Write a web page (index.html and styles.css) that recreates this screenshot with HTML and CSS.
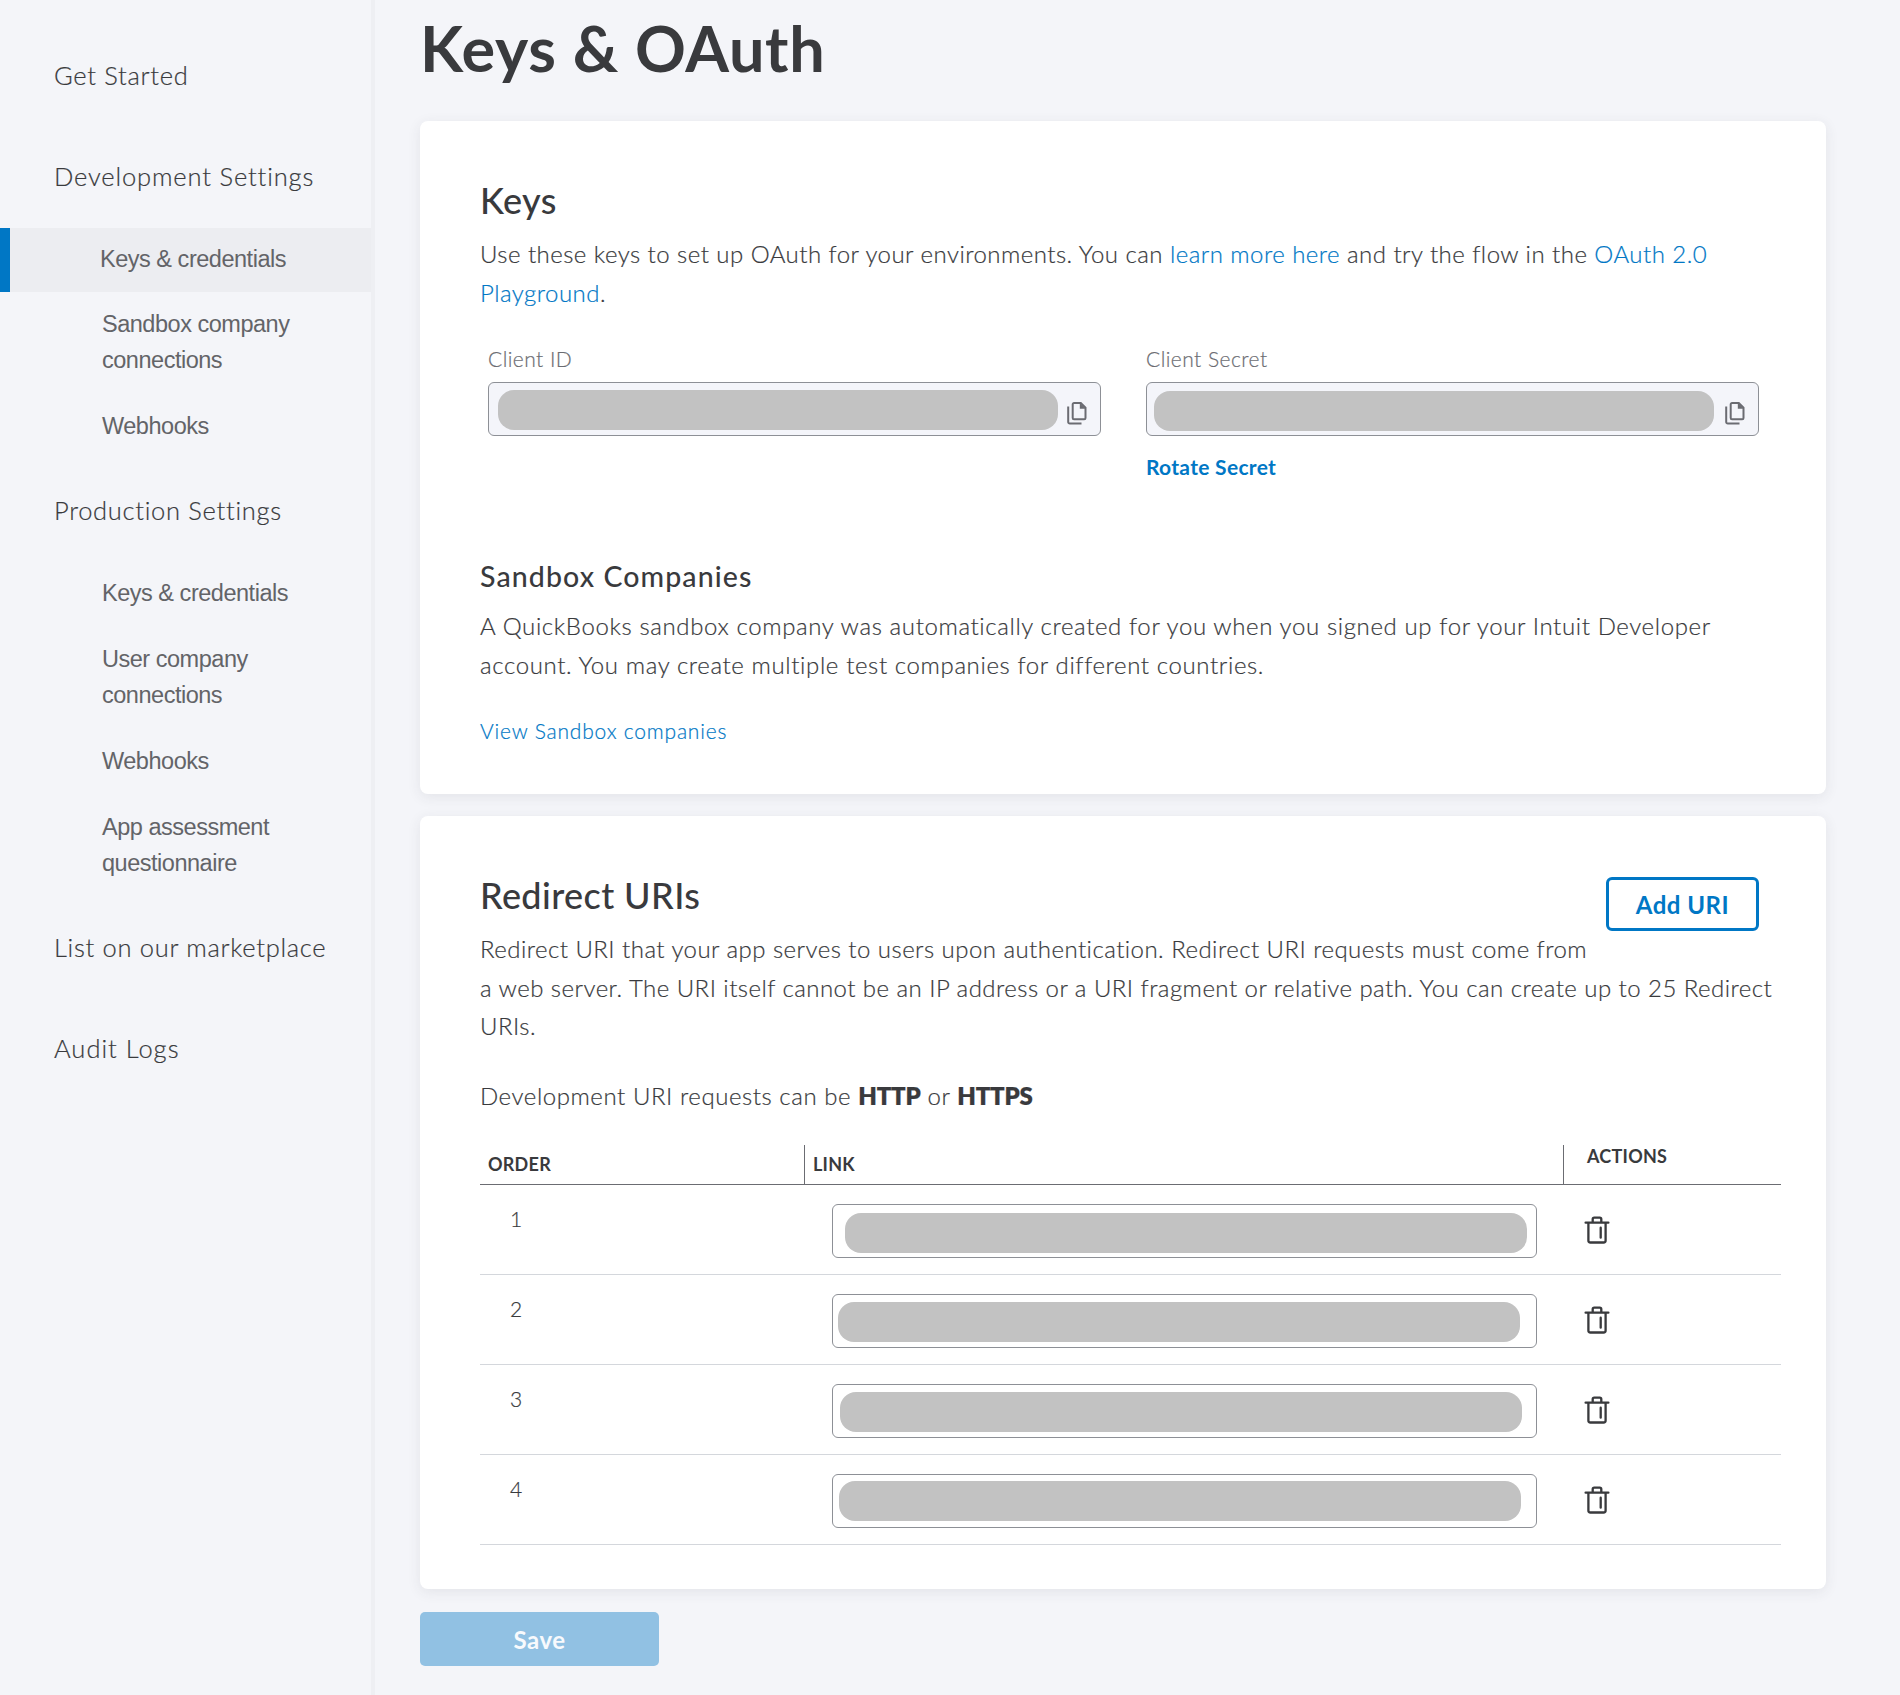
FILE: index.html
```html
<!DOCTYPE html>
<html lang="en">
<head>
<meta charset="utf-8">
<title>Keys &amp; OAuth</title>
<link rel="stylesheet" href="styles.css">
</head>
<body>
<svg width="0" height="0" class="sprite">
  <symbol id="copy" viewBox="0 0 20 24"><path d="M1.2 5.500V21a1.600 1.600 0 0 0 1.600 1.600H14.500" fill="none" stroke="currentColor" stroke-width="2"/><path d="M7 2h6.800l4.700 4.700V17a1.300 1.300 0 0 1-1.300 1.300H7A1.300 1.300 0 0 1 5.700 17V3.300A1.300 1.300 0 0 1 7 2z" fill="none" stroke="currentColor" stroke-width="2"/><path d="M12.800 2v5.700h5.700z" fill="currentColor"/></symbol>
  <symbol id="trash" viewBox="0 0 26 30"><g fill="none" stroke="currentColor" stroke-width="2.300" stroke-linecap="round" stroke-linejoin="round"><path d="M1.600 7.700h22.800M4.400 7.700v17.800a2 2 0 0 0 2 2h13.200a2 2 0 0 0 2-2V7.700M8.700 7.200V4.200a1.500 1.500 0 0 1 1.500-1.500h5.600a1.500 1.500 0 0 1 1.500 1.500v3M16.700 12.700v10"/></g></symbol>
</svg>
<div class="layout">
  <nav class="sidebar">
    <a class="nav-heading">Get Started</a>
    <a class="nav-heading nav-heading--dev">Development Settings</a>
    <ul class="nav-list nav-list--dev">
      <li class="active">Keys &amp; credentials</li>
      <li>Sandbox company<br>connections</li>
      <li>Webhooks</li>
    </ul>
    <a class="nav-heading">Production Settings</a>
    <ul class="nav-list">
      <li>Keys &amp; credentials</li>
      <li>User company<br>connections</li>
      <li>Webhooks</li>
      <li>App assessment<br>questionnaire</li>
    </ul>
    <a class="nav-heading">List on our marketplace</a>
    <a class="nav-heading nav-heading--logs">Audit Logs</a>
  </nav>
  <main class="main">
    <h1>Keys &amp; OAuth</h1>
    <section class="card">
      <h2>Keys</h2>
      <p class="copy">Use these keys to set up OAuth for your environments. You can <a>learn more here</a> and try the flow in the <a>OAuth 2.0<br>Playground</a>.</p>
      <div class="fields">
        <div class="field">
          <label>Client ID</label>
          <div class="box"><i class="mask mask--id"></i><svg class="icon-copy"><use href="#copy"/></svg></div>
        </div>
        <div class="field">
          <label>Client Secret</label>
          <div class="box"><i class="mask mask--secret"></i><svg class="icon-copy"><use href="#copy"/></svg></div>
          <a class="rotate">Rotate Secret</a>
        </div>
      </div>
      <h3>Sandbox Companies</h3>
      <p class="copy copy--sandbox">A QuickBooks sandbox company was automatically created for you when you signed up for your Intuit Developer<br>account. You may create multiple test companies for different countries.</p>
      <a class="view">View Sandbox companies</a>
    </section>
    <section class="card card--uris">
      <button class="add">Add URI</button>
      <h2>Redirect URIs</h2>
      <p class="copy">Redirect URI that your app serves to users upon authentication. Redirect URI requests must come from<br>a web server. The URI itself cannot be an IP address or a URI fragment or relative path. You can create up to 25 Redirect<br>URIs.</p>
      <p class="copy copy--dev">Development URI requests can be <b>HTTP</b> or <b>HTTPS</b></p>
      <div class="table">
        <div class="row row--head"><div>ORDER</div><div>LINK</div><div>ACTIONS</div></div>
        <div class="row"><div class="num">1</div><div class="link"><div class="uri"><i class="mask mask--1"></i></div></div><div class="act"><svg class="icon-trash"><use href="#trash"/></svg></div></div>
        <div class="row"><div class="num">2</div><div class="link"><div class="uri"><i class="mask mask--2"></i></div></div><div class="act"><svg class="icon-trash"><use href="#trash"/></svg></div></div>
        <div class="row"><div class="num">3</div><div class="link"><div class="uri"><i class="mask mask--3"></i></div></div><div class="act"><svg class="icon-trash"><use href="#trash"/></svg></div></div>
        <div class="row"><div class="num">4</div><div class="link"><div class="uri"><i class="mask mask--4"></i></div></div><div class="act"><svg class="icon-trash"><use href="#trash"/></svg></div></div>
      </div>
    </section>
    <button class="save">Save</button>
  </main>
</div>
</body>
</html>
```
FILE: styles.css
```css
* { box-sizing: border-box; }
body {
  margin: 0;
  background: #f4f5f9;
  color: #393a3d;
  font-family: Lato, "Open Sans", sans-serif;
  font-weight: 300;
}
.sprite { display: none; }
.layout { display: flex; height: 1695px; overflow: hidden; }

.sidebar {
  flex: none;
  width: 375px;
  padding-top: 57px;
  border-right: 4px solid #eeeff3;
}
.nav-heading {
  display: block;
  margin: 0 0 65px 54px;
  font-size: 25.5px;
  line-height: 36px;
  letter-spacing: .7px;
  white-space: nowrap;
  -webkit-text-stroke: .2px currentColor;
}
.nav-heading--dev { letter-spacing: .85px; }
.nav-heading--logs { letter-spacing: 1px; }
.nav-heading:has(+ .nav-list) { margin-bottom: 47px; }
.nav-heading:has(+ .nav-list--dev) { margin-bottom: 34px; }
.nav-list {
  display: flex;
  flex-direction: column;
  gap: 30px;
  margin: 0 0 48px;
  padding: 0;
  list-style: none;
  color: #636468;
  font: 23.5px/36px "Liberation Sans", Arial, sans-serif;
  letter-spacing: -.48px;
}
.nav-list li { padding-left: 102px; }
.nav-list .active {
  margin-bottom: -16px;
  padding: 13px 0 15px 90px;
  border-left: 10px solid #0077c5;
  background: #ecedf1;
}
.nav-list--dev { margin-bottom: 48px; }

.main { width: 1406px; margin-left: 45px; }
h1, h2, h3, p { margin: 0; }
h1 {
  height: 121px;
  padding-top: 8px;
  font-size: 63px;
  font-weight: 700;
  line-height: 80px;
  letter-spacing: .7px;
}
.card {
  height: 673px;
  padding: 55px 45px 0 60px;
  border-radius: 8px;
  background: #fff;
  box-shadow: 0 3px 14px rgba(57, 58, 61, .09);
}
h2 { font-size: 36px; font-weight: 500; line-height: 48px; letter-spacing: .4px; }
h3 { margin-top: 75px; font-size: 28.5px; font-weight: 500; line-height: 40px; letter-spacing: 1.1px; }
.copy {
  margin-top: 11px;
  font-size: 24px;
  line-height: 38.6px;
  letter-spacing: .46px;
  white-space: nowrap;
  -webkit-text-stroke: .2px currentColor;
}
.copy--sandbox { letter-spacing: .62px; }
.copy--dev { margin-top: 31px; letter-spacing: .56px; }
.copy b { font-weight: 800; letter-spacing: -.2px; }
.card a { color: #0077c5; }
.fields { display: flex; gap: 45px; margin: 33px 0 0 8px; }
.field { width: 613px; }
.field:first-child { flex: none; }
label {
  display: block;
  color: #6b6c72;
  font-size: 21px;
  line-height: 28px;
  letter-spacing: .45px;
  -webkit-text-stroke: .2px currentColor;
}
.box {
  display: flex;
  height: 54px;
  margin-top: 9px;
  border: 1px solid #8d9096;
  border-radius: 6px;
  background: #f4f5fa;
}
.mask {
  flex: none;
  height: 40px;
  border-radius: 16px;
  background: #c2c2c2;
}
.mask--id { width: 560px; margin: 7px 9px 0 9px; }
.mask--secret { width: 560px; margin: 8px 11px 0 7px; }
.icon-copy { width: 20px; height: 24px; margin-top: 18px; color: #6b6c72; }
.rotate {
  display: block;
  margin-top: 17px;
  font-size: 21px;
  font-weight: 700;
  line-height: 28px;
  letter-spacing: .3px;
}
.view {
  display: block;
  margin-top: 33px;
  font-size: 21px;
  line-height: 28px;
  letter-spacing: .8px;
  -webkit-text-stroke: .2px currentColor;
}

.card--uris { height: 773px; margin-top: 22px; }
button { padding: 0; font-family: inherit; font-weight: 700; font-size: 24px; letter-spacing: .5px; }
.add {
  float: right;
  width: 153px;
  height: 54px;
  margin: 6px 22px 0 0;
  border: 3px solid #0077c5;
  border-radius: 6px;
  background: #fff;
  color: #0077c5;
}
.table { margin-top: 30px; }
.row {
  display: grid;
  grid-template-columns: 324px 759px 1fr;
  height: 90px;
  border-bottom: 1px solid #d4d7dc;
}
.row--head {
  height: 40px;
  border-color: #6b6c72;
  font-size: 18px;
  font-weight: 700;
  line-height: 22px;
  letter-spacing: .25px;
}
.row--head div { padding: 8px 0 0 8px; }
.row--head div + div { border-left: 1px solid #6b6c72; }
.row--head div:last-child { padding: 0 0 0 23px; }
.num {
  padding: 20px 0 0 30px;
  font-size: 21px;
  line-height: 28px;
  -webkit-text-stroke: .2px currentColor;
}
.link { padding: 19px 0 0 28px; }
.uri {
  display: flex;
  width: 705px;
  height: 54px;
  border: 1px solid #8d9096;
  border-radius: 6px;
}
.uri .mask { width: 682px; }
.mask--1 { margin: 8px 0 0 12px; }
.mask--2 { margin: 7px 0 0 5px; }
.mask--3 { margin: 7px 0 0 7px; }
.mask--4 { margin: 6px 0 0 6px; }
.act { padding: 30px 0 0 21px; }
.icon-trash { display: block; width: 26px; height: 30px; }
.save {
  width: 239px;
  height: 54px;
  margin-top: 23px;
  border: 0;
  border-radius: 5px;
  background: #91c1e3;
  color: #f8fafd;
}
```
